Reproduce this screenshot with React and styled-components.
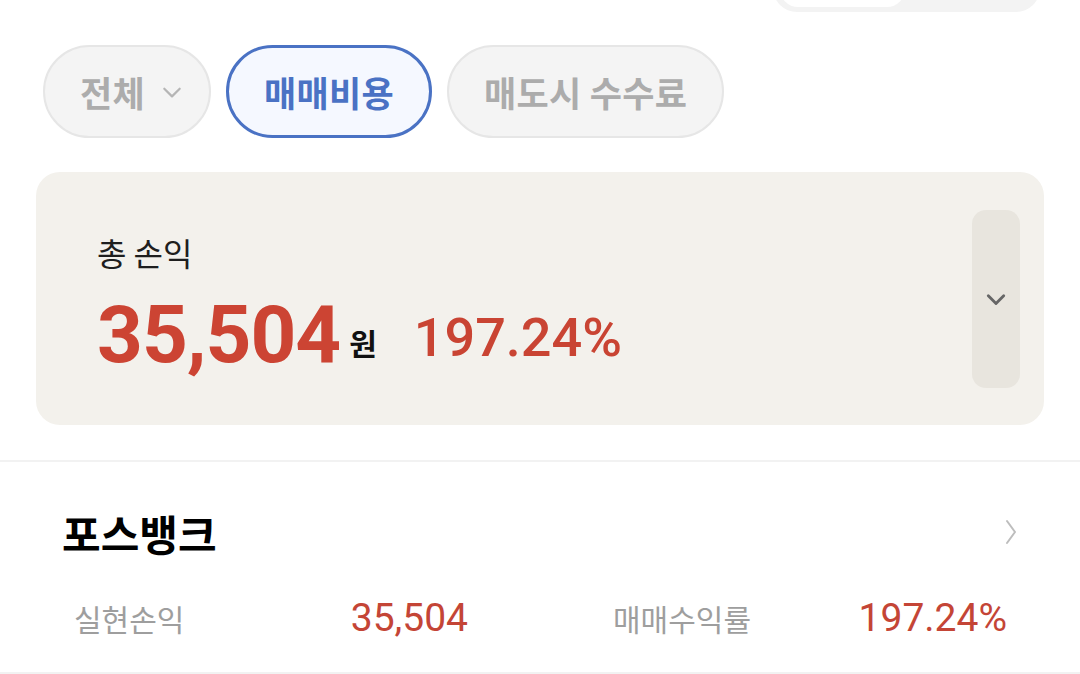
import React from 'react';
import styled, { createGlobalStyle } from 'styled-components';

const GlobalStyle = createGlobalStyle`
  body {
    margin: 0;
    background: #fff;
    font-family: "Noto Sans CJK KR", "Noto Sans", sans-serif;
  }
`;

const Page = styled.div`
  width: 1080px;
  height: 674px;
  overflow: hidden;
  background: #fff;
`;

const SegmentBar = styled.div`
  display: flex;
  justify-content: flex-end;
  padding-right: 40px;
`;

const Segment = styled.div`
  width: 267px;
  height: 48px;
  margin-top: -36px;
  padding: 5px 7px;
  box-sizing: border-box;
  background: #f3f3f3;
  border-radius: 24px;
  display: flex;
`;

const SegmentKnob = styled.div`
  width: 125px;
  background: #fff;
  border-radius: 18px;
`;

const ChipRow = styled.div`
  display: flex;
  gap: 15px;
  padding-left: 43px;
  margin-top: 33px;
`;

const Chip = styled.button`
  height: 93px;
  box-sizing: border-box;
  padding: ${p => (p.$dropdown ? '0 26px 0 35px' : '0 35px')};
  border-radius: 47px;
  border: ${p => (p.$active ? '3px solid #4a72c4' : '2px solid #e6e6e6')};
  background: ${p => (p.$active ? '#f5f8ff' : '#f4f4f4')};
  color: ${p => (p.$active ? '#4a72c4' : '#acacac')};
  font-family: "Noto Sans CJK KR", sans-serif;
  font-size: 35px;
  font-weight: 700;
  display: flex;
  align-items: center;
  gap: 16px;
  letter-spacing: 0.3px;
`;

const Card = styled.div`
  margin: 34px 36px 0;
  height: 253px;
  background: #f3f1ec;
  border-radius: 24px;
  display: flex;
  align-items: center;
`;

const Summary = styled.div`
  flex: 1;
  align-self: flex-start;
  padding: 60px 0 0 61px;
`;

const SummaryLabel = styled.div`
  font-size: 32px;
  color: #1e1e1e;
  line-height: 40px;
`;

const SummaryValues = styled.div`
  display: flex;
  align-items: flex-end;
  margin-top: 18px;
  height: 90px;
`;

const BigAmount = styled.span`
  font-family: Roboto, sans-serif;
  font-weight: 700;
  font-size: 80px;
  color: #cc4433;
  line-height: 90px;
  letter-spacing: -1px;
`;

const Won = styled.span`
  font-size: 30px;
  font-weight: 700;
  color: #111;
  line-height: 30px;
  margin-left: 9px;
  padding-bottom: 23px;
`;

const BigRate = styled.span`
  font-family: Roboto, sans-serif;
  font-weight: 500;
  font-size: 54px;
  line-height: 60px;
  color: #c94433;
  margin-left: 37px;
  padding-bottom: 12px;
`;

const ExpandButton = styled.div`
  width: 48px;
  height: 178px;
  margin-right: 24px;
  background: #e8e5de;
  border-radius: 14px;
  display: flex;
  align-items: center;
  justify-content: center;
`;

const Divider = styled.div`
  height: 2px;
  background: #f2f2f2;
  margin-top: 35px;
`;

const Broker = styled.section`
  padding: 44px 0 0;
`;

const BrokerHead = styled.div`
  display: flex;
  align-items: center;
  justify-content: space-between;
  padding: 0 62px;
  height: 52px;
`;

const BrokerName = styled.div`
  font-size: 42px;
  font-weight: 700;
  color: #000;
`;

const StatRow = styled.div`
  display: flex;
  gap: 145px;
  padding: 0 73px 0 74px;
  margin-top: 32px;
  height: 56px;
  align-items: center;
`;

const Stat = styled.div`
  flex: 1;
  display: flex;
  justify-content: space-between;
  align-items: center;
`;

const StatLabel = styled.span`
  font-size: 30px;
  color: #9e9e9e;
`;

const StatValue = styled.span`
  font-family: Roboto, sans-serif;
  font-size: 39px;
  color: #c44536;
`;

const BottomLine = styled.div`
  height: 2px;
  background: #f2f2f2;
  margin-top: 26px;
`;

const ChevronDown = ({ size = 20, color = '#8c8c8c', width = 2.6 }) => (
  <svg width={size} height={size} viewBox="0 0 20 20" fill="none">
    <path d="M3 7l7 7 7-7" stroke={color} strokeWidth={width} strokeLinecap="round" strokeLinejoin="round" />
  </svg>
);

const ChevronRight = () => (
  <svg width="14" height="26" viewBox="0 0 14 26" fill="none">
    <path d="M3 2l8 11-8 11" stroke="#bdbdbd" strokeWidth="2" strokeLinecap="round" strokeLinejoin="round" />
  </svg>
);

export default function App() {
  return (
    <Page>
      <GlobalStyle />
      <SegmentBar>
        <Segment>
          <SegmentKnob />
        </Segment>
      </SegmentBar>

      <ChipRow>
        <Chip $dropdown>
          전체
          <ChevronDown size={22} color="#b5b5b5" width={2} />
        </Chip>
        <Chip $active>매매비용</Chip>
        <Chip>매도시 수수료</Chip>
      </ChipRow>

      <Card>
        <Summary>
          <SummaryLabel>총 손익</SummaryLabel>
          <SummaryValues>
            <BigAmount>35,504</BigAmount>
            <Won>원</Won>
            <BigRate>197.24%</BigRate>
          </SummaryValues>
        </Summary>
        <ExpandButton>
          <ChevronDown size={22} color="#666" width={2.6} />
        </ExpandButton>
      </Card>

      <Divider />

      <Broker>
        <BrokerHead>
          <BrokerName>포스뱅크</BrokerName>
          <ChevronRight />
        </BrokerHead>
        <StatRow>
          <Stat>
            <StatLabel>실현손익</StatLabel>
            <StatValue>35,504</StatValue>
          </Stat>
          <Stat>
            <StatLabel>매매수익률</StatLabel>
            <StatValue>197.24%</StatValue>
          </Stat>
        </StatRow>
        <BottomLine />
      </Broker>
    </Page>
  );
}
